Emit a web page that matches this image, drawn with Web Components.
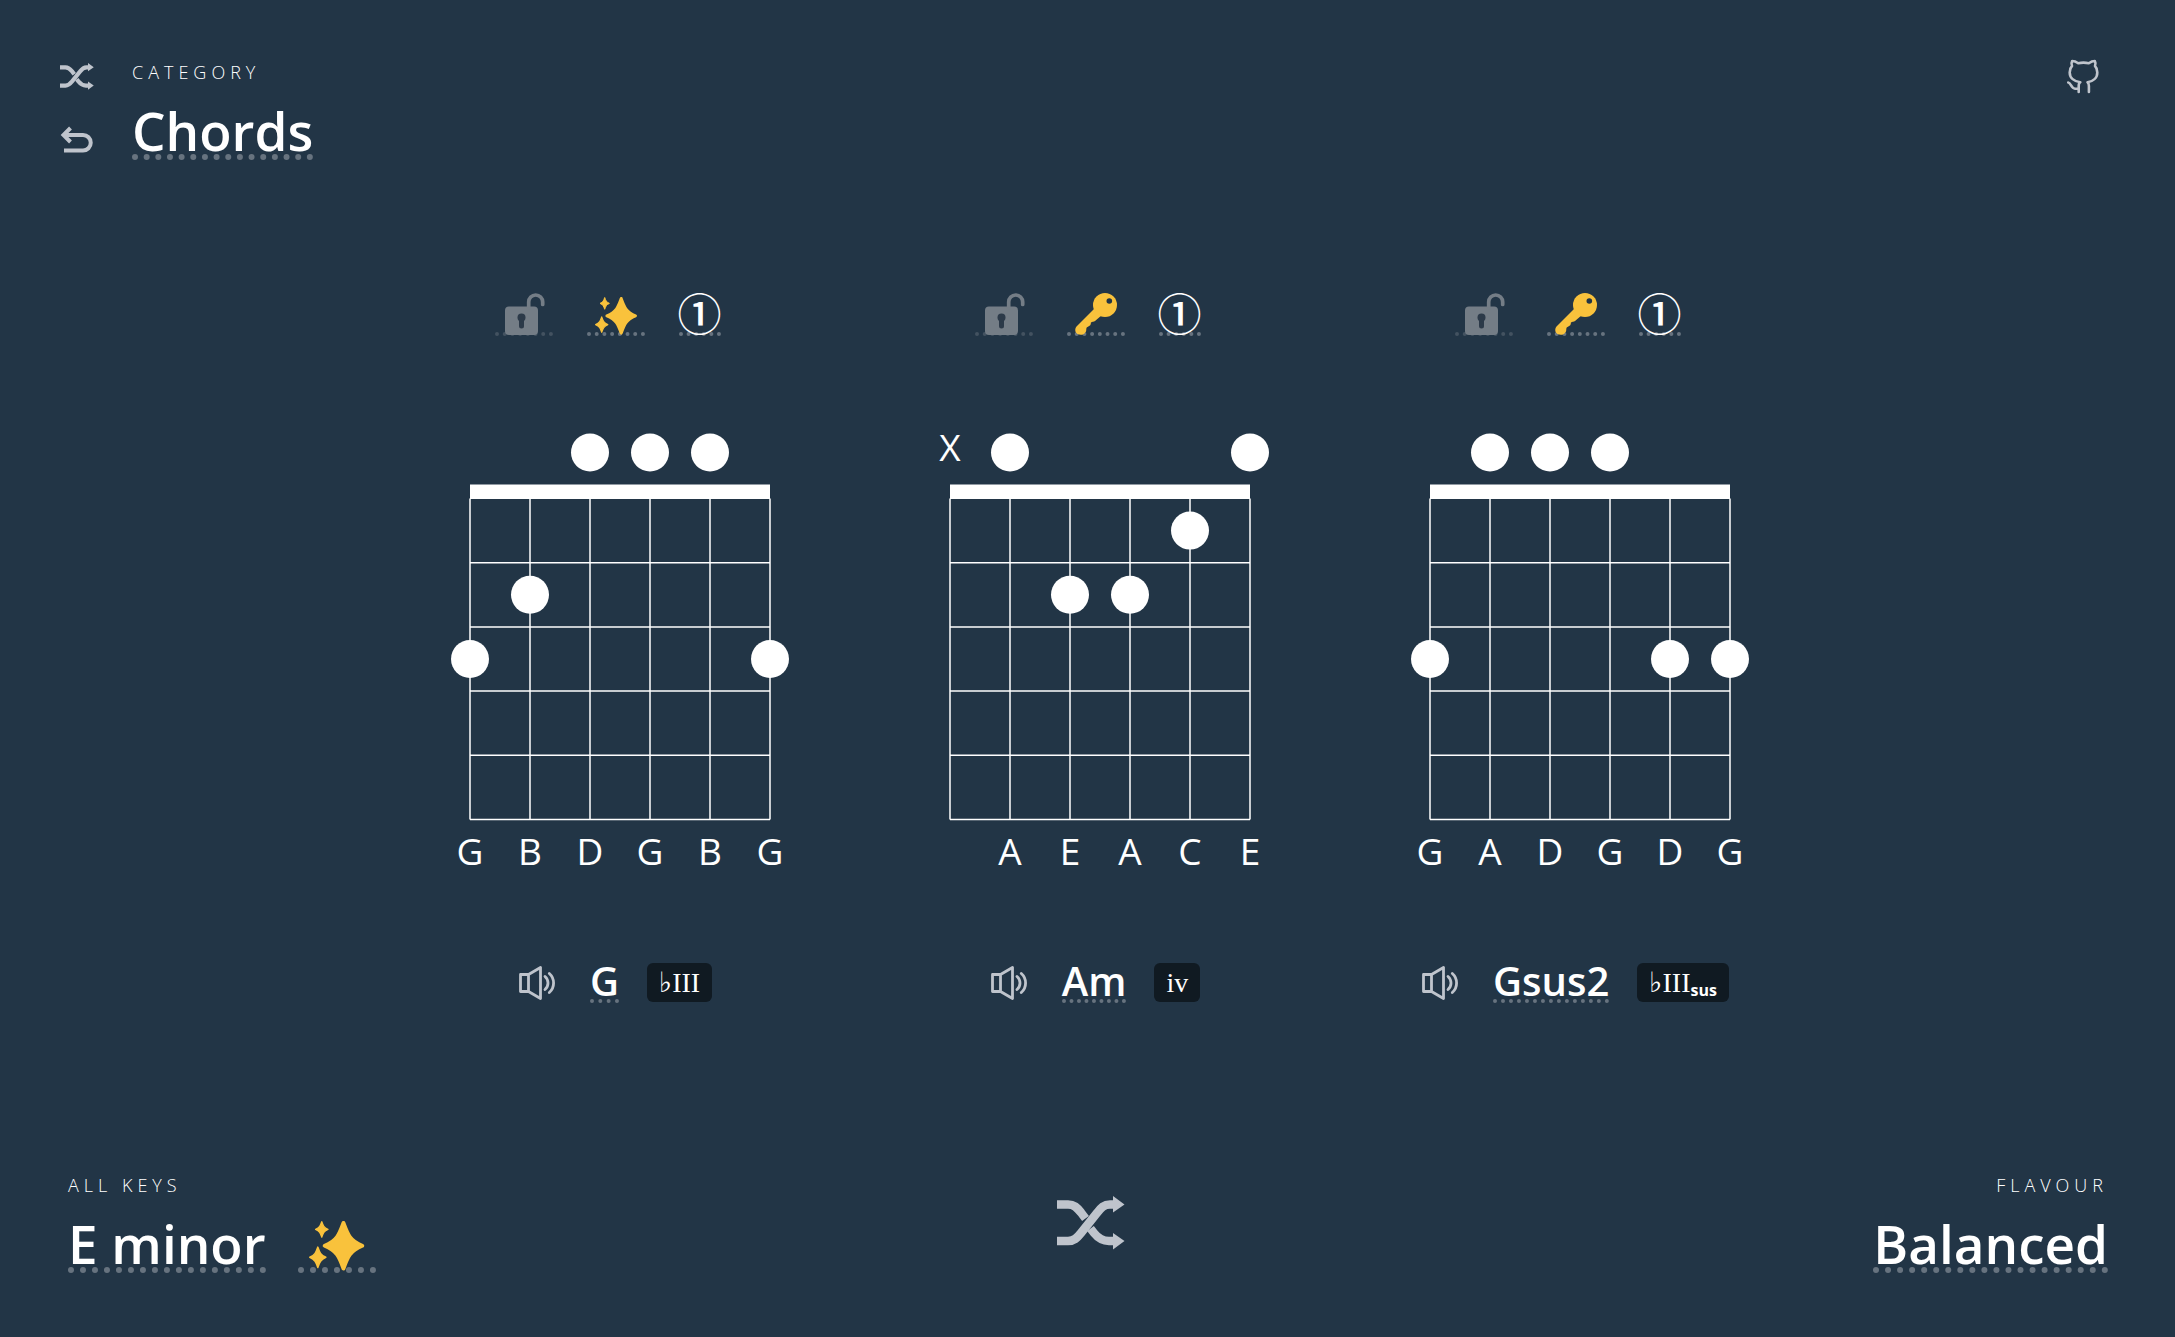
<!DOCTYPE html>
<html lang="en">
<head>
<meta charset="utf-8">
<meta name="viewport" content="width=device-width, initial-scale=1">
<title>Chords in E minor</title>
<style>
  :root { --bg: #223546; --ink: #fff; --icon: #bfc4cc; --dot: #67737f; --gold: #f9c23c; --badge: #101a22; }
  body { margin: 0; background: var(--bg); color: var(--ink); font-family: "Open Sans", "Noto Sans", sans-serif; }
</style>
</head>
<body>
<chord-app></chord-app>
<script>
const star = (x, y, rx, ry, w) => {
  const a = rx - w / 2, b = ry - w / 2;
  return `<path stroke-width="${w}" d="M${x} ${y - b}C${x + a * .22} ${y - b * .5} ${x + a * .34} ${y - b * .22} ${x + a} ${y}C${x + a * .34} ${y + b * .22} ${x + a * .22} ${y + b * .5} ${x} ${y + b}C${x - a * .22} ${y + b * .5} ${x - a * .34} ${y + b * .22} ${x - a} ${y}C${x - a * .34} ${y - b * .22} ${x - a * .22} ${y - b * .5} ${x} ${y - b}Z"/>`;
};
const ICONS = {
  shuffle: [68, 54, `<g fill="none" stroke="currentColor" stroke-width="8.5"><path d="M0 45H11C17 45 20 42 24 37L40 17C44 11.500 47 8.500 53 8.500H57"/><path d="M0 8.500H11C17 8.500 20 11.500 24 16.500L28.500 22.500"/><path d="M33.500 32.500L37 37C41 42 46 45 52 45H57"/></g><path fill="currentColor" d="M56 0L67.500 8.500L56 16.500ZM56 37L67.500 45L56 53.500Z"/>`],
  undo: [34, 28, `<path fill="none" stroke="currentColor" stroke-width="4" d="M3 9H23a7.750 7.750 0 0 1 0 15.500H4M10.500 2L3.500 9L10.500 16"/>`],
  github: [32, 36, `<path fill="none" stroke="currentColor" stroke-width="2.600" stroke-linecap="round" stroke-linejoin="round" d="M11.700 34V28C11.700 25.800 12.500 24.500 13.300 24.200C7 23.500 2.700 20 2.700 14.500C2.700 11.700 3.500 9.500 5 8C4.300 6.300 4.400 4.400 5.200 3C7.500 3 9.500 4 11.200 5.200C14.500 4.500 18.500 4.500 21.800 5.200C23.500 4 25.500 3 27.800 3C28.600 4.400 28.700 6.300 28 8C29.500 9.500 30.300 11.700 30.300 14.500C30.300 20 26 23.500 20.500 24.200C21.500 25 21.900 26 21.900 28V34M1.200 24.500C4 24.800 4 30.500 8 30.700H11.700"/>`],
  speaker: [36, 34, `<g fill="none" stroke="currentColor" stroke-width="2.800" stroke-linejoin="round" stroke-linecap="round"><path d="M1.500 8.500H9.500V25.500H1.500ZM9.500 8.500L21.500 1.500V32.500L9.500 25.500M26 10.500C30 14 30 20 26 23.500M30.300 7.500C36 12.500 36 21.500 30.300 26.500"/></g>`],
  lock: [38, 42, `<rect y="13.500" width="33" height="28.500" rx="4" fill="#747d86"/><path d="M23.700 15V9A7 7 0 0 1 37.700 9V11.500" fill="none" stroke="#747d86" stroke-width="3.700" stroke-linecap="round"/><path d="M16.500 25V33" stroke="#2c3a49" stroke-width="5" stroke-linecap="round"/><circle cx="16.500" cy="24.500" r="4" fill="#2c3a49"/>`],
  sparkles: [42, 38, `<g fill="var(--gold)" stroke="var(--gold)" stroke-linejoin="round">${star(26.2, 18.8, 15.8, 18.8, 3)}${star(9.7, 6.4, 5.2, 6.4, 1)}${star(6.7, 27.6, 6.7, 8.3, 1.2)}</g>`],
  key: [42, 42, `<g fill="var(--gold)"><circle cx="30" cy="12" r="12"/><path d="M19 16L1.500 33.500C-.5 36 0 39.500 2.500 41C5 42.300 8 42 9.500 40.500L11 38.500C11.500 37 11 36 11.700 34.500L14.500 32.700C15.700 32.300 16 30.500 15.800 29.800C17 28.500 19 29 20 28L27 22Z"/></g><circle cx="34.300" cy="8" r="2.800" fill="var(--bg)"/>`]
};

class UiIcon extends HTMLElement {
  connectedCallback() {
    const [w, h, art] = ICONS[this.getAttribute('name')];
    const height = this.getAttribute('height') || h;
    this.attachShadow({ mode: 'open' }).innerHTML = `
      <style>:host{display:block;flex:none} svg{display:block;height:${height}px;overflow:visible}</style>
      <svg viewBox="0 0 ${w} ${h}" aria-hidden="true">${art}</svg>`;
  }
}
customElements.define('ui-icon', UiIcon);

class IconButton extends HTMLElement {
  connectedCallback() {
    this.attachShadow({ mode: 'open' }).innerHTML = `
      <style>
        :host{display:block}
        button,a{display:flex;align-items:center;justify-content:center;height:100%;padding:0;border:0;background:none;color:var(--icon);cursor:pointer}
      </style>
      ${this.hasAttribute('href')
        ? `<a href="${this.getAttribute('href')}" aria-label="${this.getAttribute('label')}"><slot></slot></a>`
        : `<button type="button" aria-label="${this.getAttribute('label')}"><slot></slot></button>`}`;
  }
}
customElements.define('icon-button', IconButton);

/* Labelled choice: small spaced caption over one or more dotted titles */
class TitlePicker extends HTMLElement {
  connectedCallback() {
    this.attachShadow({ mode: 'open' }).innerHTML = `
      <style>
        :host{display:flex;flex-direction:column;gap:22px;align-items:flex-start}
        :host([end]){align-items:flex-end}
        .label{font-size:18px;line-height:28px;font-weight:300;letter-spacing:5px;text-transform:uppercase}
        .row{display:flex;gap:32px}
        button{box-sizing:border-box;height:52px;margin:0;padding:0;border:0;border-bottom:6px dotted var(--dot);background:none;color:inherit;font:600 53px/46px "Open Sans","Noto Sans",sans-serif;white-space:nowrap;cursor:pointer}
        .extra{display:flex;align-items:flex-end;justify-content:center;width:78px}
        .extra ui-icon{margin-bottom:-4px}
      </style>
      <span class="label" id="l">${this.getAttribute('label')}</span>
      <div class="row">
        <button type="button" id="b" aria-haspopup="listbox" aria-labelledby="l b"><slot></slot></button>
        ${this.hasAttribute('extra') ? `<button class="extra" type="button" aria-label="Any key"><ui-icon name="sparkles" height="50"></ui-icon></button>` : ''}
      </div>`;
  }
}
customElements.define('title-picker', TitlePicker);

class FretBoard extends HTMLElement {
  connectedCallback() {
    const frets = this.getAttribute('frets').split(',');
    const notes = this.getAttribute('notes').split(',');
    const top = 74.5, step = 64.2, bottom = top + step * 5;
    let s = '';
    for (let i = 0; i < 6; i++) s += `<path d="M${40 + i * 60} ${top}V${bottom}"/>`;
    for (let i = 1; i < 6; i++) s += `<path d="M40 ${top + i * step}H340"/>`;
    const marks = frets.map((f, i) => {
      const x = 40 + i * 60;
      if (f === 'x') return `<text x="${x}" y="37">X</text>`;
      const y = f === '0' ? 28.5 : top + (f - .5) * step;
      return `<circle cx="${x}" cy="${y}" r="19"/>`;
    }).join('');
    const names = notes.map((n, i) => n ? `<text x="${40 + i * 60}" y="441">${n}</text>` : '').join('');
    this.attachShadow({ mode: 'open' }).innerHTML = `
      <style>
        :host{display:block}
        svg{display:block;width:100%;fill:var(--ink);overflow:visible}
        text{font-size:37px;font-weight:500;text-anchor:middle}
        g{stroke:var(--ink);stroke-width:1.500px}
      </style>
      <svg viewBox="0 -12 380 472" role="img"><g>${s}</g><rect x="40" y="60.500" width="300" height="14.500"/>${marks}${names}</svg>`;
  }
}
customElements.define('fret-board', FretBoard);

class ChordCard extends HTMLElement {
  connectedCallback() {
    const a = n => this.getAttribute(n);
    this.attachShadow({ mode: 'open' }).innerHTML = `
      <style>
        :host{display:flex;flex-direction:column;align-items:stretch}
        button{margin:0;padding:0;border:0;background:none;color:inherit;font-family:inherit;cursor:pointer}
        .dotted{box-sizing:border-box;border-bottom:4px dotted var(--dot)}
        .tools{display:flex;justify-content:center;gap:34px}
        .tools button{display:flex;align-items:flex-end;justify-content:center;width:58px;height:50px}
        .tools ui-icon{margin-bottom:-3px}
        .tools .lock{border-color:#435260}
        .tools .voice{width:42px;font:500 44px/40px "Noto Sans CJK JP",sans-serif}
        fret-board{margin:76px 38px 77px 62px}
        .name-row{display:flex;align-items:center;justify-content:center;height:44px;padding-left:16px}
        .name{height:40px;margin:0 28px 0 35px;font-size:40px;line-height:36px;font-weight:600}
        .badge{display:flex;align-items:baseline;padding:0 12px;border-radius:6px;background:var(--badge);font:28px/39px "Liberation Serif","DejaVu Sans",serif}
        .badge small{font:700 16px/16px "Open Sans",sans-serif;position:relative;top:4px}
      </style>
      <div class="tools">
        <button type="button" class="dotted lock" aria-label="Lock chord"><ui-icon name="lock"></ui-icon></button>
        <button type="button" class="dotted" aria-label="Chord source"><ui-icon name="${a('mode')}"></ui-icon></button>
        <button type="button" class="dotted voice" aria-label="Voicing">①</button>
      </div>
      <fret-board frets="${a('frets')}" notes="${a('notes')}"></fret-board>
      <div class="name-row">
        <icon-button label="Play chord"><ui-icon name="speaker"></ui-icon></icon-button>
        <button type="button" class="dotted name">${a('name')}</button>
        <span class="badge"><slot></slot>${a('suffix') ? `<small>${a('suffix')}</small>` : ''}</span>
      </div>`;
  }
}
customElements.define('chord-card', ChordCard);

class ChordApp extends HTMLElement {
  connectedCallback() {
    this.attachShadow({ mode: 'open' }).innerHTML = `
      <style>
        :host{display:flex;flex-direction:column;min-height:100vh}
        header{display:flex;align-items:flex-start;padding:44px 76px 0 60px}
        .actions{margin-right:38px}
        .actions icon-button, .repo{height:64px}
        header title-picker{padding-top:14px}
        .repo{margin-left:auto}
        main{flex:1;display:flex;align-items:center;justify-content:center;padding-bottom:53px}
        .cards{display:grid;grid-template-columns:repeat(3,minmax(0,480px))}
        footer{display:grid;grid-template-columns:1fr auto 1fr;align-items:center;padding:0 67px 64px 68px}
        footer icon-button{padding:2px 0 0 6px}
      </style>
      <header>
        <div class="actions">
          <icon-button label="Shuffle category"><ui-icon name="shuffle" height="27"></ui-icon></icon-button>
          <icon-button label="Undo"><ui-icon name="undo"></ui-icon></icon-button>
        </div>
        <title-picker label="Category">Chords</title-picker>
        <icon-button class="repo" href="#source" label="Source code"><ui-icon name="github"></ui-icon></icon-button>
      </header>
      <main>
        <div class="cards">
          <chord-card mode="sparkles" frets="3,2,0,0,0,3" notes="G,B,D,G,B,G" name="G">♭III</chord-card>
          <chord-card mode="key" frets="x,0,2,2,1,0" notes=",A,E,A,C,E" name="Am">iv</chord-card>
          <chord-card mode="key" frets="3,0,0,0,3,3" notes="G,A,D,G,D,G" name="Gsus2" suffix="sus">♭III</chord-card>
        </div>
      </main>
      <footer>
        <title-picker label="All keys" extra>E minor</title-picker>
        <icon-button label="Shuffle chords"><ui-icon name="shuffle"></ui-icon></icon-button>
        <title-picker label="Flavour" end>Balanced</title-picker>
      </footer>`;
  }
}
customElements.define('chord-app', ChordApp);
</script>
</body>
</html>
